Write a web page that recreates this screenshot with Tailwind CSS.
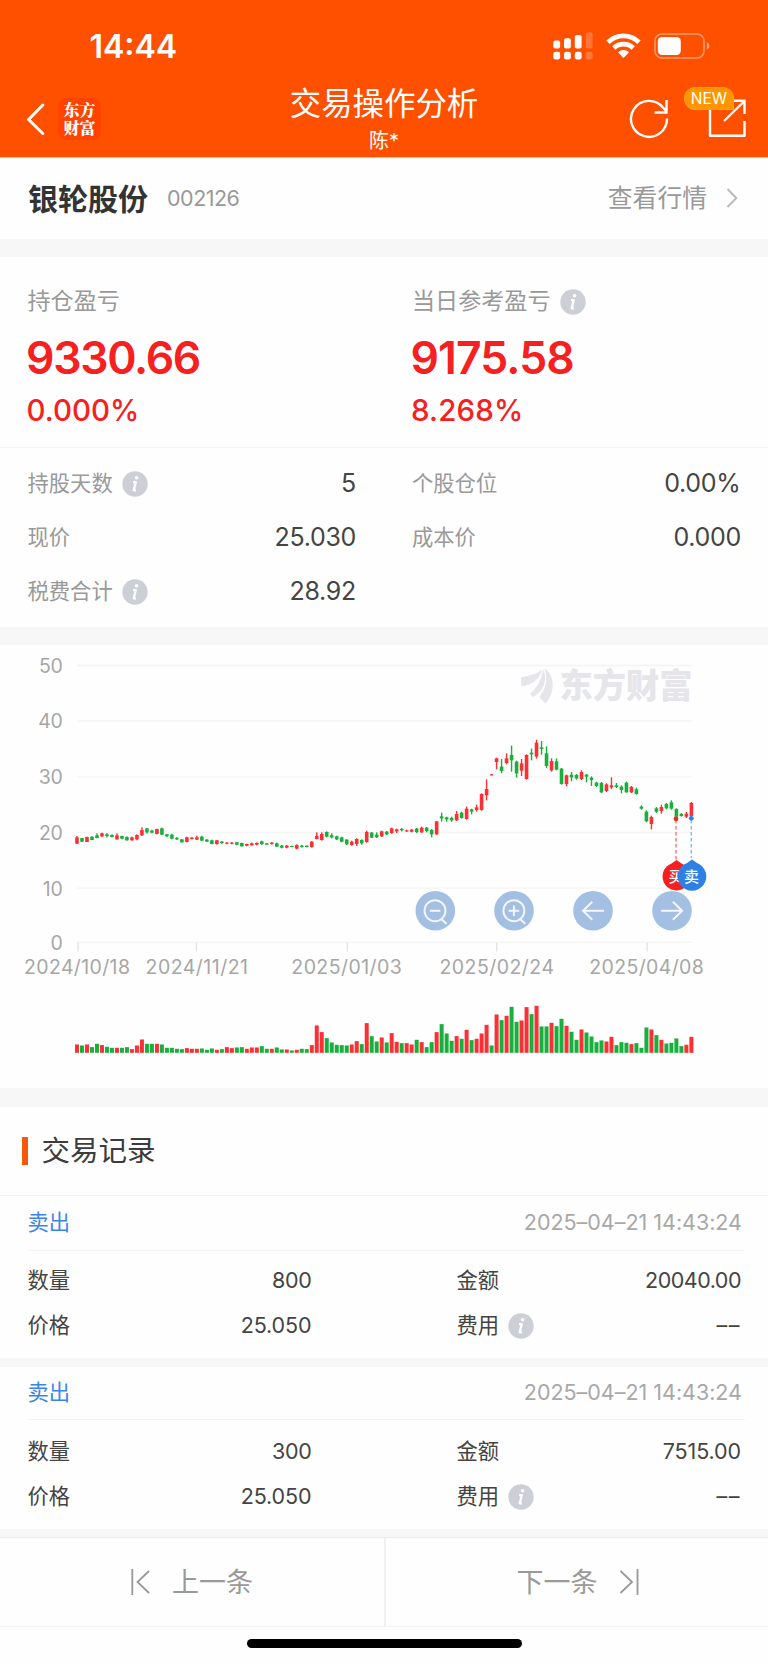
<!DOCTYPE html>
<html lang="zh-CN">
<head>
<meta charset="utf-8">
<meta name="viewport" content="width=device-width, initial-scale=1">
<title>交易操作分析</title>
<script src="https://cdn.jsdelivr.net/npm/@tailwindcss/browser@4"></script>
</head>
<body class="bg-white">
<svg class="hidden">
  <symbol id="info" viewBox="0 0 26 26">
    <circle cx="13" cy="13" r="12.7" fill="#cccfd5"/>
    <circle cx="14.6" cy="6.8" r="1.800" fill="#fff"/>
    <path d="M11 11.200h2.800l-2.200 8.200h2.400" fill="none" stroke="#fff" stroke-width="2.200" stroke-linejoin="round"/>
  </symbol>
</svg>
<div class="flex h-[1664px] w-[768px] flex-col overflow-hidden bg-[#fefefe] font-['Inter','Noto_Sans_CJK_SC',sans-serif] leading-none text-[#444]">

  <header class="flex h-[158px] shrink-0 flex-col border-b border-[#ffb890] bg-[#ff5000] text-white">
    <div class="flex h-[84px] shrink-0 items-center justify-between pt-2 pl-[89.5px] pr-[57px]">
      <div class="pt-px text-[32px] font-semibold">14:44</div>
      <div class="flex items-center">
        <svg class="h-7 w-10" viewBox="0 0 40 28" fill="#fff">
          <rect x="0.3" y="8.6" width="6.8" height="8" rx="2"/><rect x="11" y="6.2" width="6.8" height="10.4" rx="2"/><rect x="21.8" y="3" width="6.8" height="13.6" rx="2"/><rect x="32.8" y="0.3" width="6.8" height="16.3" rx="2" opacity=".22"/>
          <rect x="0.3" y="19.8" width="6.8" height="7.6" rx="2.2"/><rect x="11" y="19.8" width="6.8" height="7.6" rx="2.2"/><rect x="21.8" y="19.8" width="6.8" height="7.6" rx="2.2"/><rect x="32.8" y="19.8" width="6.8" height="7.6" rx="2.2" opacity=".22"/>
        </svg>
        <svg class="ml-[13px] h-[26px] w-[35px]" viewBox="0 0 35 26">
          <g fill="none" stroke="#fff" stroke-width="4.8"><path d="M2 9.2a22.3 22.3 0 0 1 31 0"/><path d="M7.8 15a14.2 14.2 0 0 1 19.4 0"/></g>
          <path d="M12 19.2a8.2 8.2 0 0 1 11 0L17.500 25z" fill="#fff"/>
        </svg>
        <svg class="ml-[13px] h-[26px] w-[57px]" viewBox="0 0 57 26">
          <rect x="1" y="1" width="49" height="24" rx="7" fill="none" stroke="#fff" stroke-width="1.6" opacity=".42"/>
          <rect x="3.800" y="4" width="23" height="18" rx="4.200" fill="#fff"/>
          <path d="M52.800 9.200q2.700 1.200 2.700 3.800t-2.700 3.800z" fill="#fff" opacity=".5"/>
        </svg>
      </div>
    </div>
    <div class="grid h-[73px] grid-cols-[1fr_auto_1fr]">
      <div class="flex items-center pb-[3px] pl-[26px]">
        <svg class="h-8 w-[20px]" viewBox="0 0 20 32"><path d="M16.800 2L2.600 16.500 16.800 30.500" fill="none" stroke="#fff" stroke-width="3" stroke-linecap="round" stroke-linejoin="round"/></svg>
        <div class="ml-[12px] flex h-[42px] w-[43px] flex-col items-center justify-center rounded-lg bg-[#ff4300] font-['Noto_Serif_CJK_SC','Noto_Sans_CJK_SC',sans-serif] text-[16px] font-black leading-[18px]"><span>东方</span><span>财富</span></div>
      </div>
      <div class="flex flex-col items-center pt-[5px]">
        <h1 class="text-[31.4px] font-normal leading-[31px]">交易操作分析</h1>
        <div class="mt-[11px] text-[20px] leading-5">陈*</div>
      </div>
      <div class="relative flex items-center justify-end pr-[22px]">
        <svg class="-mt-1 h-10 w-10" viewBox="0 0 40 40" fill="none" stroke="#fff" stroke-width="2.400">
          <path d="M38 19.500A18 18 0 1 1 33.800 8.300L37.600 12.500M37.500 1V13.500H25.500"/>
        </svg>
        <svg class="-mt-[5px] ml-[39px] h-[38px] w-[38px]" viewBox="0 0 38 38" fill="none" stroke="#fff" stroke-width="2.400">
          <path d="M2 10V36.800H36.500V22" stroke-linejoin="round"/><path d="M16 22L36 2.500M25 1.800H36.500V15"/>
        </svg>
        <div class="absolute right-[34px] top-[3px] flex h-[23px] w-[50px] items-center justify-center rounded-full rounded-br-[4px] border border-[#ffa020] bg-[#ff9500] text-[15.500px]">NEW</div>
      </div>
    </div>
  </header>

  <section class="flex h-[81px] shrink-0 items-center justify-between pl-7 pr-[30px] text-[#999]">
    <div class="flex items-center">
      <h2 class="text-[30px] font-bold text-[#333]">银轮股份</h2>
      <span class="ml-[19px] text-[21.500px] tracking-[-0.5px]">002126</span>
    </div>
    <div class="flex items-center text-[24.800px] text-[#999]">查看行情
      <svg class="ml-[19px] h-5 w-3" viewBox="0 0 12 20"><path d="M1.500 1L10.300 10 1.500 19" fill="none" stroke="#bbb" stroke-width="2"/></svg>
    </div>
  </section>
  <div class="h-[17.500px] shrink-0 bg-[#f7f7f7]"></div>

  <section class="h-[370.500px] shrink-0">
    <div class="grid h-[191px] grid-cols-2 border-b border-[#f3f3f3] pt-[33px]">
      <div class="pl-[27.500px]">
        <div class="flex h-6 items-center text-[23.100px] text-[#999]">持仓盈亏</div>
        <div class="-ml-[1.500px] mt-[20px] flex h-[50px] items-center text-[44.500px] font-semibold tracking-[-1.3px] text-[#f62020]">9330.66</div>
        <div class="-ml-px mt-[13px] flex h-7 items-center text-[29.500px] font-medium text-[#f62020]">0.000%</div>
      </div>
      <div class="pl-7">
        <div class="flex h-6 items-center text-[23.100px] text-[#999]">当日参考盈亏<svg class="ml-[9px] h-[26px] w-[26px]"><use href="#info"/></svg></div>
        <div class="-ml-[1.500px] mt-[20px] flex h-[50px] items-center text-[44.500px] font-semibold tracking-[-0.9px] text-[#f62020]">9175.58</div>
        <div class="-ml-px mt-[13px] flex h-7 items-center text-[29.500px] font-medium tracking-[0.15px] text-[#f62020]">8.268%</div>
      </div>
    </div>
    <div class="grid grid-cols-2 pt-[9px] text-[21.300px] text-[#999] [&_b]:text-[25px] [&_b]:font-normal [&_b]:tracking-[-0.3px] [&_b]:text-[#444]">
      <div class="flex h-[54px] items-center pl-[27.500px] pr-[28px]">持股天数<svg class="ml-[9px] h-[26px] w-[26px]"><use href="#info"/></svg><b class="ml-auto">5</b></div>
      <div class="flex h-[54px] items-center justify-between pl-7 pr-[27.500px]">个股仓位<b>0.00%</b></div>
      <div class="flex h-[54px] items-center justify-between pl-[27.500px] pr-[28px]">现价<b>25.030</b></div>
      <div class="flex h-[54px] items-center justify-between pl-7 pr-[27px]">成本价<b>0.000</b></div>
      <div class="flex h-[54px] items-center pl-[27.500px] pr-[28px]">税费合计<svg class="ml-[9px] h-[26px] w-[26px]"><use href="#info"/></svg><b class="ml-auto">28.92</b></div>
    </div>
  </section>
  <div class="h-[18px] shrink-0 bg-[#f7f7f7]"></div>

  <section class="h-[443px] shrink-0">
    <svg id="chart" class="block h-[443px] w-[768px] font-['Inter','Noto_Sans_CJK_SC',sans-serif]" viewBox="0 645 768 443">
      <g fill="#e5e5ea">
        <path d="M521 677.500C528 675.500 536 675 542 669.500C540 679 532 685 521.500 686.500z"/>
        <path d="M530 693.500C536.500 689 541.500 680 543 669.300C547.500 678 545 692 532.500 697z"/>
        <path d="M544.500 668.800C554.500 674 556 692 545.500 703.500C543 701 540 698.500 539.500 696.500C546 689 548 679 544.500 668.800z"/>
        <text x="559.500" y="698" font-size="34" font-weight="900" textLength="133" lengthAdjust="spacingAndGlyphs">东方财富</text>
      </g>
      <g id="grid" stroke="#f4f4f4" stroke-width="1.300"></g>
      <g id="ticks" stroke="#e4e4e4" stroke-width="1.300"></g>
      <g id="labels" fill="#a6a6a6" font-size="19.500"></g>
      <g id="candles"></g>
      <g id="volume"></g>
      <g fill="none" stroke-width="1.500" stroke-dasharray="3.500 2.500">
        <path d="M676 820V861" stroke="#f08080"/><path d="M691.300 820V858" stroke="#8db8ee"/>
      </g>
      <circle cx="676" cy="818.800" r="2.400" fill="#f62020"/><circle cx="691.300" cy="818.300" r="2.400" fill="#2f80e4"/>
      <path d="M676.500 860l5 3.500a14 14 0 1 1-10 0z" fill="#f62020"/>
      <text x="668.500" y="881.500" font-size="15" font-weight="500" fill="#fff">买</text>
      <path d="M692 859.500l5 3.500a14.300 14.300 0 1 1-10 0z" fill="#2f80e4"/>
      <text x="684" y="881.500" font-size="15" font-weight="500" fill="#fff">卖</text>
      <g fill="#a3c0e3"><circle cx="435.300" cy="910.700" r="19.800"/><circle cx="514" cy="910.700" r="19.800"/><circle cx="593" cy="910.700" r="19.800"/><circle cx="672" cy="910.700" r="19.800"/></g>
      <g fill="none" stroke="#fff" stroke-width="1.900" opacity=".88">
        <circle cx="435" cy="910.700" r="10.500"/><path d="M429.800 910.700h10.600M441.500 919.200l5 4.600"/>
        <circle cx="513.900" cy="910.700" r="10.500"/><path d="M508.600 910.700h10.600M513.900 905.400v10.600M520.300 919.200l5 4.600"/>
        <path d="M604 910.700H583M592.300 901.700L583 910.700l9.300 9"/>
        <path d="M661.200 910.700H682M672.900 901.700L682.200 910.700l-9.300 9"/>
      </g>
    </svg>
  </section>
  <div class="h-[18.500px] shrink-0 bg-[#f7f7f7]"></div>

  <section class="flex h-[89.500px] shrink-0 items-center border-b border-[#f3f3f3] pl-[21.500px]">
    <span class="h-7 w-[6px] bg-[#f45a0a]"></span>
    <h2 class="ml-[14px] text-[28.500px] font-normal text-[#3c3c3c]">交易记录</h2>
  </section>

  <section class="h-[161.500px] shrink-0 pl-[27.500px] pr-[27px] text-[21.300px]">
    <div class="-mr-1 flex h-[54.500px] items-center justify-between border-b border-[#f3f3f3] pr-[3px]">
      <span class="text-[#3c85e8]">卖出</span><time class="text-[21.500px] tracking-[-0.02px] text-[#a8a8a8]">2025–04–21 14:43:24</time>
    </div>
    <div class="grid grid-cols-[284px_1fr] gap-x-[145px] pt-[8px]">
      <div class="flex h-[45px] items-center justify-between">数量<span class="text-[21.500px] tracking-[-0.3px]">800</span></div>
      <div class="flex h-[45px] items-center justify-between">金额<span class="text-[21.500px] tracking-[-0.5px]">20040.00</span></div>
      <div class="flex h-[45px] items-center justify-between">价格<span class="text-[21.500px] tracking-[-0.1px]">25.050</span></div>
      <div class="flex h-[45px] items-center">费用<svg class="ml-[9px] h-[26px] w-[26px]"><use href="#info"/></svg><span class="ml-auto text-[21.500px] tracking-[1.500px]">––</span></div>
    </div>
  </section>
  <div class="h-[9.500px] shrink-0 bg-[#f7f7f7]"></div>
  <section class="h-[161.500px] shrink-0 pl-[27.500px] pr-[27px] text-[21.300px]">
    <div class="-mr-1 flex h-[53px] items-center justify-between border-b border-[#f3f3f3] pr-[3px]">
      <span class="text-[#3c85e8]">卖出</span><time class="text-[21.500px] tracking-[-0.02px] text-[#a8a8a8]">2025–04–21 14:43:24</time>
    </div>
    <div class="grid grid-cols-[284px_1fr] gap-x-[145px] pt-[9px]">
      <div class="flex h-[45px] items-center justify-between">数量<span class="text-[21.500px] tracking-[-0.3px]">300</span></div>
      <div class="flex h-[45px] items-center justify-between">金额<span class="text-[21.500px] tracking-[-0.1px]">7515.00</span></div>
      <div class="flex h-[45px] items-center justify-between">价格<span class="text-[21.500px] tracking-[-0.1px]">25.050</span></div>
      <div class="flex h-[45px] items-center">费用<svg class="ml-[9px] h-[26px] w-[26px]"><use href="#info"/></svg><span class="ml-auto text-[21.500px] tracking-[1.500px]">––</span></div>
    </div>
  </section>
  <div class="h-[8.500px] shrink-0 bg-[#f7f7f7]"></div>

  <nav class="grid h-[90px] shrink-0 grid-cols-2 border-y border-t-[#ebebeb] border-b-[#f3f3f3] text-[27px] text-[#999]">
    <div class="flex items-center pl-[130px]">
      <svg class="h-[26px] w-[22px]" viewBox="0 0 22 26"><path d="M2.300 0V26M19 2L7.500 13 19 24" fill="none" stroke="#999" stroke-width="1.800"/></svg>
      <span class="ml-[20px]">上一条</span>
    </div>
    <div class="flex items-center border-l-2 border-[#f0f0f0] pl-[130.500px]">
      <span>下一条</span>
      <svg class="ml-[20.500px] h-[26px] w-[22px]" viewBox="0 0 22 26"><path d="M19.500 0V26M2.500 2L14 13 2.500 24" fill="none" stroke="#999" stroke-width="1.800"/></svg>
    </div>
  </nav>
  <div class="flex justify-center pt-[12px]"><div class="h-[9px] w-[275px] rounded-full bg-black"></div></div>
</div>

<script>
const NS = 'http://www.w3.org/2000/svg';
function add(parent, tag, attrs, text) {
  const el = document.createElementNS(NS, tag);
  for (const k in attrs) el.setAttribute(k, attrs[k]);
  if (text) el.textContent = text;
  document.getElementById(parent).appendChild(el);
}
// Axis
[[50,665.5],[40,721],[30,776.8],[20,832.5],[10,888.2],[0,942.3]].forEach(([v, y]) => {
  add('grid', 'line', {x1: 77, x2: 691.7, y1: y, y2: y});
  add('labels', 'text', {x: 62.5, y: y + 7.3, 'text-anchor': 'end', 'letter-spacing': '-0.3'}, String(v));
});
[[78,24,106,'2024/10/18'],[196.5,145.5,102.500,'2024/11/21'],[347.3,291.3,110.5,'2025/01/03'],[496.7,439.5,114.5,'2025/02/24'],[647.2,589.3,114.5,'2025/04/08']].forEach(([tx, x, w, s]) => {
  add('ticks', 'line', {x1: tx, x2: tx, y1: 942.5, y2: 951.5});
  add('labels', 'text', {x: x, y: 974.3, textLength: w}, s);
});
// Daily bars: colour, wick top, wick bottom, body top, body bottom, volume (thirds of a pixel)
const D = `R 588 612 592 611 25|G 594 606 594 605 22|R 590 606 591 606 25|G 589 600 590 600 17|G 580 595 586 594 27|R 578 591 580 589 23|G 579 592 583 588 18|G 583 592 585 591 15|R 580 599 586 598 15|G 587 598 588 596 15|G 589 602 591 601 17|R 590 602 592 601 11|R 583 601 585 598 22|R 562 588 570 586 40|G 564 581 565 577 27|G 569 580 572 578 27|R 566 583 567 582 27|G 563 585 565 584 25|G 582 591 583 589 15|G 581 598 584 596 15|G 591 600 594 598 12|G 597 608 598 607 11|R 590 607 592 606 14|R 591 598 593 597 12|R 587 600 592 599 12|G 587 603 590 602 13|G 597 606 599 605 9|G 599 613 601 612 13|R 600 614 601 612 9|G 603 612 605 609 11|R 606 613 608 611 17|R 606 613 608 611 14|G 606 616 607 614 16|G 608 620 609 619 17|R 611 619 612 617 12|R 608 617 610 616 16|R 607 616 609 614 16|G 602 615 604 612 20|G 609 614 610 614 12|R 606 614 608 612 12|G 608 621 610 620 16|G 615 625 617 623 10|R 615 625 617 623 10|G 617 621 618 620 7|R 613 628 615 626 9|G 615 623 617 621 12|G 616 622 617 621 11|R 603 623 605 621 23|R 577 598 588 597 82|R 577 602 582 600 62|G 574 592 576 590 44|G 580 595 586 592 31|G 587 600 589 598 24|G 590 607 592 605 23|G 597 615 599 613 22|R 602 617 605 615 25|R 595 618 597 612 35|G 598 614 600 610 26|R 572 608 576 606 89|G 576 594 578 593 50|G 577 594 584 592 34|R 572 591 574 589 46|G 573 585 575 583 31|R 563 581 565 579 59|R 566 579 568 574 33|G 564 574 567 571 29|R 569 576 571 574 29|R 567 577 569 575 25|G 564 579 566 576 39|R 560 579 563 577 32|G 561 577 563 573 17|G 567 592 570 583 32|R 543 585 544 583 62|G 518 545 529 535 86|G 530 545 532 538 58|G 530 545 534 541 36|R 513 543 522 541 50|G 515 536 518 534 42|R 500 539 506 537 69|G 506 523 508 515 38|R 494 515 502 510 42|R 460 512 462 510 58|R 418 481 447 466 84|G 402 402 402 402 22|R 353 388 355 366 115|G 357 400 380 393 98|R 340 373 355 369 111|G 317 395 345 361 138|G 362 413 365 400 93|R 357 408 370 392 97|R 343 419 345 417 137|G 326 361 338 343 116|R 299 356 308 350 141|G 303 344 322 327 79|G 319 384 340 378 79|R 355 395 363 391 90|G 355 391 364 389 80|G 384 434 386 432 102|R 404 439 406 432 81|G 396 424 404 412 63|G 402 419 405 415 39|R 391 420 396 417 70|G 402 427 404 410 61|G 409 438 413 420 49|G 425 441 428 438 32|G 426 459 429 457 37|R 430 456 433 453 34|R 412 447 436 442 48|G 429 444 436 441 23|G 436 460 440 450 32|G 425 458 428 457 30|R 438 459 441 457 26|G 443 464 448 462 29|G 496 509 500 506 15|G 511 547 515 544 76|R 527 568 531 552 70|G 501 519 505 515 53|R 494 521 501 513 39|G 489 508 492 505 28|G 481 509 487 506 30|G 505 533 507 530 43|G 519 530 522 528 20|R 516 534 521 530 24|R 486 531 489 528 48`.split('|');
D.forEach((row, i) => {
  const [c, wt, wb, bt, bb, v] = row.split(' ');
  const fill = c === 'R' ? '#fb3035' : '#18b03c';
  const x = 77 + i * 4.995, y = n => 640 + n / 3;
  if (i === 83) add('candles', 'rect', {x: x - 1.3, y: 774, width: 2.6, height: 1.6, fill: '#fb3035'});
  else {
    add('candles', 'rect', {x: x - 0.7, y: y(+wt), width: 1.4, height: (wb - wt) / 3, fill});
    add('candles', 'rect', {x: x - 1.8, y: y(+bt), width: 3.6, height: Math.max(1, (bb - bt) / 3), fill});
  }
  add('volume', 'rect', {x: x - 2, y: 1052.800 - v / 3, width: 4, height: v / 3, fill});
});
</script>
</body>
</html>
